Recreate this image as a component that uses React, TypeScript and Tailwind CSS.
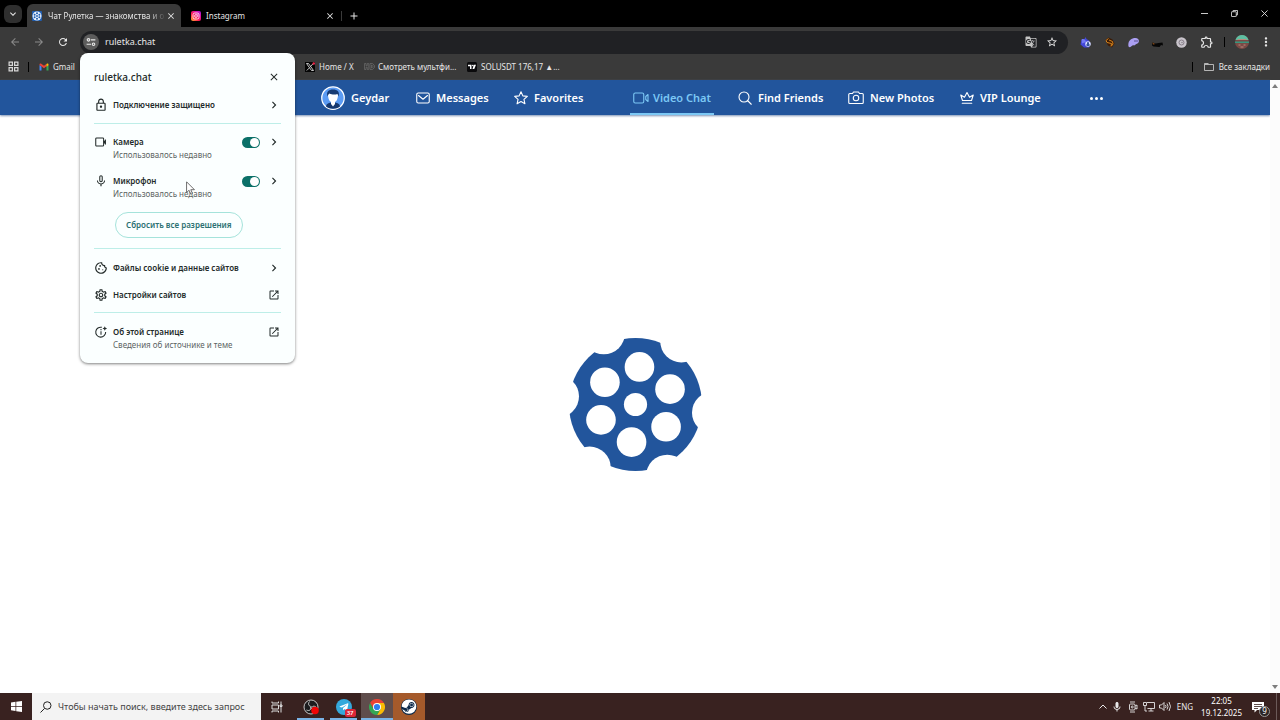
import { useState } from 'react';
import type { ReactNode } from 'react';
import {
  MdAdd,
  MdArrowBack,
  MdArrowForward,
  MdChevronRight,
  MdClose,
  MdExpandMore,
  MdFolderOpen,
  MdGTranslate,
  MdMic,
  MdMicNone,
  MdMoreVert,
  MdOpenInNew,
  MdOutlineCookie,
  MdOutlineExtension,
  MdOutlineLock,
  MdOutlineSettings,
  MdRefresh,
  MdStarBorder,
} from 'react-icons/md';
import { FaSteam, FaTelegramPlane } from 'react-icons/fa';

/* ---------- Icons ---------- */

function WheelIcon({ className }: { className: string }) {
  const angles = [-84, -24, 36, 96, 156, 216];
  const point = (deg: number, dist: number) => ({
    cx: 66 + dist * Math.cos((deg * Math.PI) / 180),
    cy: 66 + dist * Math.sin((deg * Math.PI) / 180),
  });
  return (
    <svg viewBox="0 0 132 132" className={className} aria-hidden="true">
      <circle cx="66" cy="66" r="66" fill="#22559c" />
      {angles.map((a) => (
        <circle key={`notch-${a}`} {...point(a + 30, 77.5)} r="21" fill="#fff" />
      ))}
      {angles.map((a) => (
        <circle key={`hole-${a}`} {...point(a, 37.5)} r="14.7" fill="#fff" />
      ))}
      <circle cx="66" cy="66" r="11.5" fill="#fff" />
    </svg>
  );
}

function TabWheelIcon() {
  return (
    <svg viewBox="0 0 20 20" className="size-2.5 shrink-0" aria-hidden="true">
      <rect width="20" height="20" rx="2" fill="#1f5cae" />
      <circle cx="10" cy="10" r="9" fill="#e8f2ff" />
      <g fill="#1f5cae">
        <circle cx="10" cy="10" r="1.8" />
        <circle cx="10" cy="4.6" r="2" />
        <circle cx="14.7" cy="7.3" r="2" />
        <circle cx="14.7" cy="12.7" r="2" />
        <circle cx="10" cy="15.4" r="2" />
        <circle cx="5.3" cy="12.7" r="2" />
        <circle cx="5.3" cy="7.3" r="2" />
      </g>
    </svg>
  );
}

function InstagramIcon() {
  return (
    <svg viewBox="0 0 20 20" className="size-2.5 shrink-0" aria-hidden="true">
      <defs>
        <linearGradient id="insta" x1="0" y1="1" x2="1" y2="0">
          <stop offset="0" stopColor="#ffb52e" />
          <stop offset="0.4" stopColor="#ff1b52" />
          <stop offset="0.7" stopColor="#e010a0" />
          <stop offset="1" stopColor="#a020e8" />
        </linearGradient>
      </defs>
      <rect width="20" height="20" rx="4" fill="url(#insta)" />
      <rect x="4" y="4" width="12" height="12" rx="3.5" fill="none" stroke="#fff" strokeWidth="1.6" />
      <circle cx="10" cy="10" r="2.8" fill="none" stroke="#fff" strokeWidth="1.6" />
      <circle cx="13.5" cy="6.5" r="0.9" fill="#fff" />
    </svg>
  );
}

function TuneIcon() {
  return (
    <svg viewBox="0 0 16 16" className="size-2.5" fill="none" stroke="#e8e8e8" strokeWidth="1.8" aria-hidden="true">
      <circle cx="4" cy="4.5" r="2" />
      <path d="M8 4.5h7M1 11.5h7" />
      <circle cx="12" cy="11.5" r="2" />
    </svg>
  );
}

function GmailIcon() {
  return (
    <svg viewBox="0 0 20 16" className="h-2 w-2.5" aria-hidden="true">
      <path d="M1 4v11h4V7z" fill="#4285f4" />
      <path d="M19 4v11h-4V7z" fill="#34a853" />
      <path d="M1 2.5C1 .8 3 .2 4.5 1.4L10 5.6l5.5-4.2v4.8L10 10.5 1 4z" fill="#ea4335" />
      <path d="M15 1.8C17 .2 19 .8 19 2.8V4.5L15 7.5z" fill="#fbbc04" />
    </svg>
  );
}

function XIcon() {
  return (
    <svg viewBox="0 0 20 20" className="size-2.5" aria-hidden="true">
      <rect width="20" height="20" fill="#050505" />
      <path d="M3 3h4l10 14h-4zM16.5 3 11 9M9 11.5 3.5 17" fill="none" stroke="#eee" strokeWidth="1.6" />
      <circle cx="17.5" cy="3" r="2.5" fill="#f0264a" />
    </svg>
  );
}

function HdIcon() {
  return (
    <svg viewBox="0 0 22 14" className="h-[7px] w-[11px]" fill="none" stroke="#747474" strokeWidth="1.2" aria-hidden="true">
      <path d="M1 1h3v4.500h2.500V1h3v12h-3V8.500H4V13H1zM12 1h5l4 4v4l-4 4h-5zM15 4v6h1.500L18 8.500v-3L16.500 4z" />
    </svg>
  );
}

function TradingViewIcon() {
  return (
    <svg viewBox="0 0 20 20" className="size-2.5" aria-hidden="true">
      <rect width="20" height="20" rx="3" fill="#0a0a0c" />
      <path d="M2 5.500h7V14H6V8.500H2zM13.500 5.500H18L14.500 14H11z" fill="#fff" />
      <circle cx="11.5" cy="7" r="1.5" fill="#fff" />
    </svg>
  );
}

function CameraIcon() {
  return (
    <svg viewBox="0 0 24 24" className="size-3.5" fill="none" stroke="currentColor" strokeWidth="1.8" aria-hidden="true">
      <rect x="3" y="5" width="13.5" height="14" rx="1.5" />
      <path d="M17 10.500 20.500 7v10L17 13.500z" fill="currentColor" stroke="none" />
    </svg>
  );
}

function AboutIcon() {
  return (
    <svg viewBox="0 0 24 24" className="size-3.5" fill="none" stroke="currentColor" strokeWidth="1.8" aria-hidden="true">
      <path d="M13.500 4A8.500 8.500 0 1 0 20 12" />
      <path d="M12 10.500v6M12 7v2" />
      <path d="M18.500 2l1.200 2.800 2.800 1.200-2.800 1.200-1.200 2.800-1.200-2.800L14.500 6l2.800-1.200z" fill="currentColor" stroke="none" />
    </svg>
  );
}

function AvatarIcon() {
  return (
    <svg viewBox="0 0 48 48" className="size-6 shrink-0" aria-hidden="true">
      <circle cx="24" cy="24" r="22.5" fill="#5b9bf3" stroke="#fff" strokeWidth="2.5" />
      <path d="M10 41c1-6 5-8 14-8s13 2 14 8c-8 6-20 6-28 0z" fill="#15386e" />
      <path d="M20 29h8v7l-4 5-4-5z" fill="#fff" />
      <path d="M14 17c0 10 4 16 10 16s10-6 10-16c0-3-4-5-10-5s-10 2-10 5z" fill="#fff" />
      <path d="M13 21c-3-9 2-14 11-14s14 5 11 14l-2-5c-6 2-12 1-16-1-2 1-3 3-4 6z" fill="#173b73" />
    </svg>
  );
}

function NavIcon({ children, wide }: { children: ReactNode; wide?: boolean }) {
  return (
    <svg
      viewBox={wide ? '0 0 32 28' : '0 0 28 28'}
      className={wide ? 'h-3.5 w-4 shrink-0' : 'size-3.5 shrink-0'}
      fill="none"
      stroke="currentColor"
      strokeWidth="2.2"
      strokeLinejoin="round"
      strokeLinecap="round"
      aria-hidden="true"
    >
      {children}
    </svg>
  );
}

function ChromeIcon() {
  return (
    <svg viewBox="0 0 32 32" className="size-4" aria-hidden="true">
      <path d="M16 8h13.860A16 16 0 0 1 16 32l7-12z" fill="#fbbc04" />
      <path d="M16 8h13.860A16 16 0 0 0 2.140 8L9 20z" fill="#ea4335" />
      <path d="M9 20 2.140 8A16 16 0 0 0 16 32l7-12z" fill="#34a853" />
      <circle cx="16" cy="16" r="8" fill="#fff" />
      <circle cx="16" cy="16" r="6.2" fill="#2f7ff0" />
    </svg>
  );
}

function ObsIcon() {
  return (
    <svg viewBox="0 0 32 32" className="size-4" aria-hidden="true">
      <circle cx="16" cy="16" r="14" fill="#1b1b1d" stroke="#d5d5d5" strokeWidth="1.8" />
      <path d="M13 5c-4 5-1 10 4 10M27 17c-5-5-10-2-10 3M7 22c6 3 10-1 8-6" fill="none" stroke="#cfcfcf" strokeWidth="2" />
      <circle cx="24" cy="23" r="7.5" fill="#f00505" />
    </svg>
  );
}

/* ---------- Browser ---------- */

function TabStrip() {
  return (
    <div className="flex h-[27px] items-end bg-black text-[8px] text-[#e6e6e6]">
      <button aria-label="Поиск вкладок" className="mb-1 ml-1 flex size-[18px] items-center justify-center rounded-md bg-[#2f2f2f]">
        <MdExpandMore className="size-3" />
      </button>
      <div className="ml-[5px] flex h-[23px] w-[154px] items-center rounded-t-md bg-[#3a3a3a] pr-[5px] pl-[5px]">
        <TabWheelIcon />
        <span className="ml-[6px] flex-1 whitespace-nowrap [mask-image:linear-gradient(90deg,#000_85%,transparent)]">
          Чат Рулетка — знакомства и о
        </span>
        <button aria-label="Закрыть вкладку">
          <MdClose className="size-2.5" />
        </button>
      </div>
      <div className="flex h-[23px] w-[154px] items-center pl-[10px]">
        <InstagramIcon />
        <span className="ml-[5px] flex-1">Instagram</span>
        <button aria-label="Закрыть вкладку">
          <MdClose className="size-2.5" />
        </button>
      </div>
      <div className="ml-1.5 flex h-[23px] items-center gap-1.5">
        <span className="h-2.5 w-px bg-[#3a3a3a]" />
        <button aria-label="Новая вкладка">
          <MdAdd className="size-3" />
        </button>
      </div>
      <div className="ml-auto flex h-full items-center gap-[23px] pr-3">
        <button aria-label="Свернуть" className="flex w-2 justify-center">
          <span className="h-px w-[7px] bg-[#c9c9c9]" />
        </button>
        <button aria-label="Развернуть">
          <svg viewBox="0 0 16 16" className="size-[7px]" fill="none" stroke="#e0e0e0" strokeWidth="2" aria-hidden="true">
            <rect x="1" y="4" width="11" height="11" rx="1" />
            <path d="M5 4V1h10v10h-3" />
          </svg>
        </button>
        <button aria-label="Закрыть">
          <svg viewBox="0 0 16 16" className="size-[7px]" stroke="#e6e6e6" strokeWidth="2" aria-hidden="true">
            <path d="m1 1 14 14M15 1 1 15" />
          </svg>
        </button>
      </div>
    </div>
  );
}

function Extensions() {
  return (
    <div className="flex items-center gap-[13px] pl-3">
      <svg viewBox="0 0 22 22" className="size-[11px]" aria-hidden="true">
        <path d="M3 6 9 4l2-4 2 4 5 3 3 7-3 7H8L1 15z" fill="#4348d8" />
        <path d="M3 5c4-2 8 0 9 5l-8 3z" fill="#7379f5" />
        <circle cx="16" cy="14" r="5.5" fill="#d9e0ff" />
        <path d="M14 14v-2a2 2 0 0 1 4 0v2M13 14h6v4h-6z" fill="#35539b" />
      </svg>
      <svg viewBox="0 0 22 22" className="size-[11px]" aria-hidden="true">
        <path d="M3 6 9 1l8 4 4 8-5 8-8-4z" fill="#3c1b05" />
        <path d="M9 3 4 7l2 4 9 2-1 6M10 6l7 3 1 5-3 4" fill="none" stroke="#d5851f" strokeWidth="2" />
      </svg>
      <svg viewBox="0 0 22 22" className="size-[11px]" aria-hidden="true">
        <path d="M1 19C-1 8 6 2 15 2c6 0 8 5 6 9-2 3-4 2-6 4-2 3-4 1-6 2-3 2-5 5-8 2z" fill="#ab9ff2" />
        <path d="M14 6v4M18 6v4" stroke="#5b518f" strokeWidth="2" />
      </svg>
      <svg viewBox="0 0 22 22" className="size-[11px]" aria-hidden="true">
        <path d="M1 10c4 4 8 3 12 2l8-1 1 6-4-1-3 4-12-1-3-2z" fill="#060606" />
        <path d="M1 10c2 3 3 3 6 4l-5 1z" fill="#a4591b" />
      </svg>
      <svg viewBox="0 0 22 22" className="size-[11px]" aria-hidden="true">
        <circle cx="11" cy="11" r="10.5" fill="#c9c4cb" />
        <circle cx="11" cy="11" r="5" fill="none" stroke="#857d88" strokeWidth="2" />
        <circle cx="12" cy="11" r="1.5" fill="#857d88" />
      </svg>
      <MdOutlineExtension className="size-3.5" />
    </div>
  );
}

function Toolbar() {
  return (
    <div className="flex h-[30px] items-center bg-[#3a3a3a] text-[#e8e8e8]">
      <div className="flex w-20 items-center gap-3 pl-[9px]">
        <button aria-label="Назад">
          <MdArrowBack className="size-3 text-[#8a8a8a]" />
        </button>
        <button aria-label="Вперёд">
          <MdArrowForward className="size-3 text-[#8a8a8a]" />
        </button>
        <button aria-label="Обновить">
          <MdRefresh className="size-3" />
        </button>
      </div>
      <div className="flex h-[23px] min-w-0 flex-1 items-center rounded-full bg-[#202124] pr-[10px] pl-[3px]">
        <button aria-label="Сведения о сайте" className="flex size-4 shrink-0 items-center justify-center rounded-full bg-[#5c5c5c]">
          <TuneIcon />
        </button>
        <input
          aria-label="Адресная строка"
          defaultValue="ruletka.chat"
          className="ml-[6px] min-w-0 flex-1 bg-transparent text-[9px] outline-none"
        />
        <MdGTranslate className="size-3 text-[#c4c4c4]" />
        <button aria-label="Добавить в закладки" className="ml-[9px]">
          <MdStarBorder className="size-3" />
        </button>
      </div>
      <Extensions />
      <span className="ml-[10px] h-2.5 w-px bg-black" />
      <button aria-label="Профиль" className="ml-[10px]">
        <svg viewBox="0 0 28 28" className="size-3.5" aria-hidden="true">
          <circle cx="14" cy="14" r="14" fill="#7a4a45" />
          <path d="M1 10C3 3 8 0 14 0s11 3 13 10z" fill="#5fbfa2" />
          <path d="M0 13h28v3H0z" fill="#35987f" />
          <path d="M5 9h18M7 20h4M17 20h4M11 24h6" stroke="#b98c80" strokeWidth="2" />
        </svg>
      </button>
      <button aria-label="Меню" className="mr-[7px] ml-[10px]">
        <MdMoreVert className="size-3.5" />
      </button>
    </div>
  );
}

function BookmarksBar() {
  return (
    <div className="flex h-[23px] items-center bg-[#3a3a3a] pr-[10px] pb-1 pl-2 text-[8px] text-[#e6e6e6]">
      <button aria-label="Приложения">
        <svg viewBox="0 0 20 20" className="size-[11px]" fill="none" stroke="#d8d8d8" strokeWidth="2.2" aria-hidden="true">
          <path d="M2 2h6v6H2zM12 2h6v6h-6zM2 12h6v6H2zM12 12h6v6h-6z" />
        </svg>
      </button>
      <span className="ml-[9px] h-2.5 w-px bg-black" />
      <a href="#gmail" className="ml-[10px] flex w-[266px] items-center gap-1">
        <GmailIcon />
        Gmail
      </a>
      <a href="#home" className="flex w-[59px] items-center gap-1 whitespace-nowrap">
        <XIcon />
        Home / X
      </a>
      <a href="#cartoons" className="flex w-[103px] items-center gap-[3px] whitespace-nowrap">
        <HdIcon />
        Смотреть мультфи...
      </a>
      <a href="#solusdt" className="flex items-center gap-1 whitespace-nowrap">
        <TradingViewIcon />
        SOLUSDT 176,17 ▲...
      </a>
      <div className="ml-auto flex items-center">
        <span className="h-2.5 w-px bg-black" />
        <button className="ml-[10px] flex items-center gap-1 whitespace-nowrap">
          <MdFolderOpen className="size-3 text-[#b5b5b5]" />
          Все закладки
        </button>
      </div>
    </div>
  );
}

/* ---------- Site ---------- */

function NavLink({ label, width, icon, active }: { label: string; width: string; icon: ReactNode; active?: boolean }) {
  return (
    <a href={`#${label}`} className={`${width} flex h-full shrink-0 items-center`}>
      <span
        className={
          active
            ? '-mx-[3px] flex h-full items-center gap-1 border-b-2 border-[#7cc8f5] px-[3px] pt-[3px] text-[#7cc8f5]'
            : 'flex items-center gap-[6px] pt-px'
        }
      >
        {icon}
        {label}
      </span>
    </a>
  );
}

function SiteNav() {
  return (
    <nav className="flex h-[35px] items-center overflow-hidden bg-[#22559c] pl-[321px] text-[11px] font-semibold whitespace-nowrap text-white shadow-[0_1px_2px_#7d93b5]">
      <NavLink label="Geydar" width="w-[95px]" icon={<AvatarIcon />} />
      <NavLink
        label="Messages"
        width="w-[98px]"
        icon={
          <NavIcon>
            <rect x="1.5" y="4" width="25" height="20" rx="3" />
            <path d="m5 9 9 7.500L23 9" />
          </NavIcon>
        }
      />
      <NavLink
        label="Favorites"
        width="w-[119px]"
        icon={
          <NavIcon>
            <path d="m14 1.500 3.700 8.300 9 .9-6.800 6 2 8.900L14 21l-7.900 4.600 2-8.900-6.800-6 9-.9z" />
          </NavIcon>
        }
      />
      <NavLink
        active
        label="Video Chat"
        width="w-[105px]"
        icon={
          <NavIcon wide>
            <rect x="1.5" y="4" width="20" height="20" rx="3" />
            <path d="m25.500 11 4.500-4v14l-4.500-4z" />
          </NavIcon>
        }
      />
      <NavLink
        label="Find Friends"
        width="w-[110px]"
        icon={
          <NavIcon>
            <circle cx="12" cy="12" r="10" />
            <path d="m19.500 19.500 7 7" />
          </NavIcon>
        }
      />
      <NavLink
        label="New Photos"
        width="w-[112px]"
        icon={
          <NavIcon wide>
            <path d="M3.500 5H9l2-3h10l2 3h5.500a2 2 0 0 1 2 2v16a2 2 0 0 1-2 2h-25a2 2 0 0 1-2-2V7a2 2 0 0 1 2-2z" />
            <circle cx="16" cy="14" r="5.5" />
          </NavIcon>
        }
      />
      <NavLink
        label="VIP Lounge"
        width="w-[130px]"
        icon={
          <NavIcon>
            <path d="M5 19 1.500 8l7.500 4.500L14 3l5 9.500L26.500 8 23 19zM4.500 24.500h19" />
          </NavIcon>
        }
      />
      <button aria-label="Ещё" className="flex gap-0.5 pt-px">
        <span className="size-[3px] rounded-full bg-white" />
        <span className="size-[3px] rounded-full bg-white" />
        <span className="size-[3px] rounded-full bg-white" />
      </button>
    </nav>
  );
}

/* ---------- Site permissions popup ---------- */

function Divider() {
  return <hr className="mt-1 mb-[5px] border-[#bdeee8]" />;
}

function LinkRow({ icon, label, external }: { icon: ReactNode; label: string; external?: boolean }) {
  return (
    <button className="flex h-[27px] w-full items-center gap-[5px] text-left font-semibold">
      {icon}
      <span className="flex-1">{label}</span>
      {external ? <MdOpenInNew className="mx-px size-3" /> : <MdChevronRight className="size-3.5" />}
    </button>
  );
}

function PermissionRow({ id, icon, label }: { id: string; icon: ReactNode; label: string }) {
  const [enabled, setEnabled] = useState(true);

  return (
    <div className="pt-1.5 pb-[7px]">
      <div className="flex h-3.5 items-center gap-[5px]">
        {icon}
        <label htmlFor={id} className="flex-1 font-semibold">
          {label}
        </label>
        <input
          id={id}
          type="checkbox"
          role="switch"
          checked={enabled}
          onChange={(e) => setEnabled(e.target.checked)}
          className="mr-0.5 flex h-[11px] w-[18px] appearance-none items-center rounded-full bg-[#8a9a98] px-px before:size-[9px] before:rounded-full before:bg-white checked:justify-end checked:bg-[#0b7068]"
        />
        <button aria-label={`${label}: подробнее`}>
          <MdChevronRight className="size-3.5" />
        </button>
      </div>
      <p className="h-3 pl-[19px] leading-3 text-[#5c6463]">Использовалось недавно</p>
    </div>
  );
}

function SiteInfoPopup() {
  return (
    <section
      aria-label="Сведения о сайте"
      className="absolute top-[53px] left-20 z-10 w-[215px] rounded-lg bg-[#fbffff] px-[14px] pt-[10px] pb-1.5 text-[8px] text-[#232b2a] shadow-[0_1px_3px_#00000080]"
    >
      <div className="flex h-7 items-center justify-between">
        <h2 className="text-[10px] font-medium">ruletka.chat</h2>
        <button aria-label="Закрыть" className="mr-px">
          <MdClose className="size-3" />
        </button>
      </div>
      <LinkRow icon={<MdOutlineLock className="size-3.5" />} label="Подключение защищено" />
      <div className="pt-px">
        <Divider />
      </div>
      <PermissionRow id="camera" icon={<CameraIcon />} label="Камера" />
      <PermissionRow id="microphone" icon={<MdMicNone className="size-3.5" />} label="Микрофон" />
      <button className="mt-[5px] mb-[10px] ml-[21px] block h-[26px] rounded-full border border-[#a5e3db] px-[10px] font-semibold whitespace-nowrap text-[#2c7172]">
        Сбросить все разрешения
      </button>
      <hr className="mb-[5px] border-[#bdeee8]" />
      <LinkRow icon={<MdOutlineCookie className="size-3.5" />} label="Файлы cookie и данные сайтов" />
      <LinkRow icon={<MdOutlineSettings className="size-3.5" />} label="Настройки сайтов" external />
      <Divider />
      <a href="#about" className="block pt-[7px] pb-1.5">
        <span className="flex h-3.5 items-center gap-[5px] font-semibold">
          <AboutIcon />
          <span className="flex-1">Об этой странице</span>
          <MdOpenInNew className="mx-px size-3" />
        </span>
        <span className="block h-3 pl-[19px] leading-3 text-[#5c6463]">Сведения об источнике и теме</span>
      </a>
    </section>
  );
}

/* ---------- Windows taskbar ---------- */

function Taskbar() {
  return (
    <footer className="flex h-[27px] shrink-0 items-center bg-[#392220] text-white">
      <button aria-label="Пуск" className="flex w-8 justify-center">
        <svg viewBox="0 0 22 22" className="size-[11px]" fill="#fff" aria-hidden="true">
          <path d="M0 3l9-1.300V10H0zM10.500 1.500 22 0v10H10.500zM0 11.500h9V20l-9-1.300zM10.500 11.500H22V22l-11.500-1.600z" />
        </svg>
      </button>
      <label className="flex h-full w-[229px] items-center gap-[6px] bg-[#f3f3f3] pl-2 text-[#333]">
        <svg viewBox="0 0 24 24" className="size-3 shrink-0" fill="none" stroke="#222" strokeWidth="2" aria-hidden="true">
          <circle cx="14.5" cy="9" r="7.5" />
          <path d="M9 15 1 23" />
        </svg>
        <input
          aria-label="Поиск"
          placeholder="Чтобы начать поиск, введите здесь запрос"
          className="min-w-0 flex-1 bg-transparent text-[9px] outline-none placeholder:text-[#444]"
        />
      </label>
      <button aria-label="Представление задач" className="flex w-8 justify-center">
        <svg viewBox="0 0 24 24" className="size-3" fill="none" stroke="#ddd" strokeWidth="2" aria-hidden="true">
          <path d="M2 1v3h13V1M2 23v-3h13v3M2 8h13v8H2zM20 1v22M18 8h4v3h-4z" />
        </svg>
      </button>
      <button aria-label="OBS Studio" className="ml-1 flex h-full w-[27px] items-center justify-center border-b-2 border-[#79b3e6] pt-0.5">
        <ObsIcon />
      </button>
      <button aria-label="Telegram" className="ml-1.5 flex h-full w-[27px] items-center justify-center border-b-2 border-[#79b3e6] pt-0.5">
        <span className="relative flex size-4 items-center justify-center rounded-full bg-[#35a9dc]">
          <FaTelegramPlane className="size-2.5" />
          <span className="absolute -right-1 -bottom-0.5 rounded-xs bg-[#dc2638] px-0.5 text-[6px] leading-2 font-semibold">37</span>
        </span>
      </button>
      <button aria-label="Google Chrome" className="ml-1 flex h-full w-8 items-center justify-center border-b-2 border-[#79b3e6] bg-[#5f4d4c] pt-0.5">
        <ChromeIcon />
      </button>
      <button aria-label="Steam" className="flex h-full w-8 items-center justify-center bg-[#a55a2b]">
        <span className="rounded-full bg-[#0d2a4a]">
          <FaSteam className="size-4 text-white [clip-path:circle(46%)]" />
        </span>
      </button>

      <div className="ml-auto flex h-full items-center text-[8px]">
        <div className="flex items-center gap-1 text-[#e8e8e8]">
          <svg viewBox="0 0 16 10" className="h-[5px] w-2" fill="none" stroke="currentColor" strokeWidth="2" aria-hidden="true">
            <path d="m1 9 7-7 7 7" />
          </svg>
          <MdMic className="size-3" />
          <svg viewBox="0 0 24 24" className="size-3" fill="none" stroke="currentColor" strokeWidth="1.8" aria-hidden="true">
            <rect x="5" y="6" width="11" height="12" rx="2" />
            <path d="m16 10 4-2v8l-4-2M6 2h10M6 22h10" />
            <circle cx="10.5" cy="12" r="2" />
          </svg>
          <svg viewBox="0 0 24 22" className="h-[11px] w-3" fill="none" stroke="currentColor" strokeWidth="1.8" aria-hidden="true">
            <path d="M8 3h15v12H9M16 15v5M11 20h10M1 3h6v6H1zM4 9v11h4" />
          </svg>
          <svg viewBox="0 0 24 22" className="h-[11px] w-3" fill="none" stroke="currentColor" strokeWidth="1.8" aria-hidden="true">
            <path d="M1 8h4l5-5v16l-5-5H1zM13 8q2 3 0 6M16 5q4 6 0 12M20 2q6 9 0 18" />
          </svg>
          <span className="ml-0.5">ENG</span>
        </div>
        <time className="ml-2 text-center leading-3">
          22:05
          <br />
          19.12.2025
        </time>
        <button aria-label="Уведомления" className="relative mr-3 ml-2.5">
          <svg viewBox="0 0 24 24" className="size-3" fill="#fff" aria-hidden="true">
            <path d="M0 2h24v16H10l-5 5v-5H0z" />
            <path d="M4 7h16M4 11h16M4 15h8" stroke="#392220" strokeWidth="1.6" />
          </svg>
          <span className="absolute -right-1.5 -bottom-1 flex size-[11px] items-center justify-center rounded-full border border-[#999] bg-[#2b2424] text-[8px] leading-none">
            9
          </span>
        </button>
        <span className="mr-[3px] h-full w-px bg-[#6b5a58]" />
      </div>
    </footer>
  );
}

export default function App() {
  return (
    <div className="relative flex h-screen flex-col overflow-hidden bg-white font-['Noto_Sans',sans-serif]">
      <header>
        <TabStrip />
        <Toolbar />
        <BookmarksBar />
      </header>
      <div className="flex min-h-0 flex-1">
        <main className="flex min-w-0 flex-1 flex-col">
          <SiteNav />
          <div className="flex flex-1 items-center justify-center">
            <WheelIcon className="size-[133px]" />
          </div>
        </main>
        <div className="flex w-[10px] flex-col items-center justify-between bg-[#fcfcfc] py-1">
          <svg viewBox="0 0 6 4" className="h-1 w-1.5" fill="#7d7d7d" aria-hidden="true">
            <path d="M0 4 3 0l3 4z" />
          </svg>
          <svg viewBox="0 0 6 4" className="h-1 w-1.5" fill="#7d7d7d" aria-hidden="true">
            <path d="M0 0h6L3 4z" />
          </svg>
        </div>
      </div>
      <Taskbar />
      <SiteInfoPopup />
      {/* Mouse pointer */}
      <svg viewBox="0 0 16 24" className="absolute top-[181px] left-[186px] z-20 h-[14px] w-[9px]" fill="#fff" stroke="#555" strokeWidth="1.5" aria-hidden="true">
        <path d="M1 1v19l4.500-4 3 7 3-1.300-3-6.700H15z" />
      </svg>
    </div>
  );
}
